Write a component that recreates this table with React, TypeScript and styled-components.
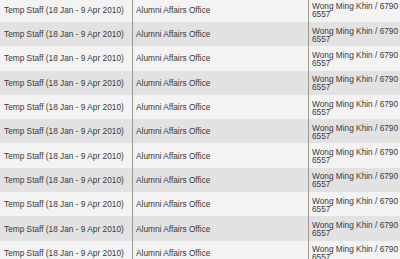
import React from 'react'
import styled, { createGlobalStyle } from 'styled-components'

const GlobalStyle = createGlobalStyle`
  html, body {
    margin: 0;
    padding: 0;
    background: #f3f3f3;
    overflow: hidden;
  }
`

const StyledList = styled.div`
  display: flex;
  flex-direction: column;
  margin-top: -2.3px;
  width: 400px;
  font-family: 'Liberation Sans', Arial, sans-serif;
  font-size: 8.3px;
  color: #3a3a3a;
`

const StyledRow = styled.div<{ $shaded: boolean }>`
  display: grid;
  grid-template-columns: 132px 176px 1fr;
  height: 24.3px;
  background: ${(p) => (p.$shaded ? '#e2e2e2' : '#f3f3f3')};
`

const StyledCell = styled.div<{ $first?: boolean }>`
  display: flex;
  align-items: center;
  padding: 0 0 0 ${(p) => (p.$first ? '4px' : '3px')};
  border-left: ${(p) => (p.$first ? 'none' : '1px solid #9a9a9a')};
  line-height: 8px;
  white-space: nowrap;
  overflow: hidden;
`

const StyledWrapCell = styled(StyledCell)`
  white-space: normal;
  padding-top: 1px;
`

const rows = Array.from({ length: 11 }, () => ({
  role: 'Temp Staff (18 Jan - 9 Apr 2010)',
  office: 'Alumni Affairs Office',
  contact: 'Wong Ming Khin / 6790 6557',
}))

export default function App(): JSX.Element {
  return (
    <>
      <GlobalStyle />
      <StyledList>
        {rows.map((row, i) => (
          <StyledRow key={i} $shaded={i % 2 === 1}>
            <StyledCell $first>{row.role}</StyledCell>
            <StyledCell>{row.office}</StyledCell>
            <StyledWrapCell>{row.contact}</StyledWrapCell>
          </StyledRow>
        ))}
      </StyledList>
    </>
  )
}
